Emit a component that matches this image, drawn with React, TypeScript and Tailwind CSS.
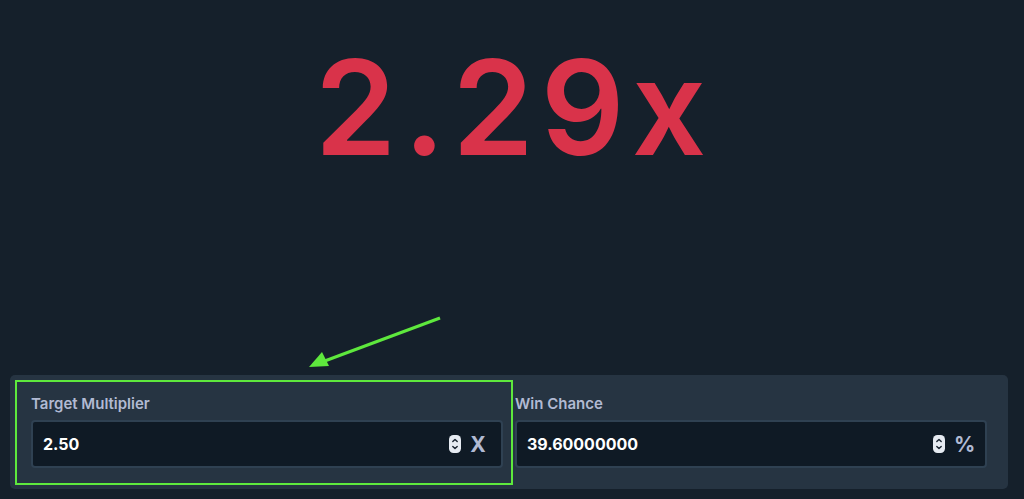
import React from "react";

const Spinner = () => (
  <svg width="12" height="18" viewBox="0 0 12 18" className="shrink-0">
    <rect x="0" y="0" width="12" height="18" rx="4.5" fill="#e6ebf2" />
    <path d="M3.8 6.6 L6 4.4 L8.2 6.6" stroke="#1a2430" strokeWidth="1.4" fill="none" strokeLinecap="round" strokeLinejoin="round" />
    <path d="M3.8 11.4 L6 13.6 L8.2 11.4" stroke="#1a2430" strokeWidth="1.4" fill="none" strokeLinecap="round" strokeLinejoin="round" />
  </svg>
);

const Field = ({ label, value, suffix }: { label: string; value: string; suffix: string }) => (
  <div className="flex flex-1 flex-col">
    <label className="mb-[6px] text-[15px] font-semibold leading-[20px] text-[#b1bad3]">{label}</label>
    <div className="flex h-[48px] items-center rounded-[4px] border-2 border-[#2f4152] bg-[#0f1a25] pl-[10px] pr-[15px]">
      <span className="flex-1 text-[16px] font-bold text-white">{value}</span>
      <Spinner />
      <span className="ml-[9px] w-[16px] text-center text-[21px] font-bold leading-none text-[#b1bad3]">{suffix}</span>
    </div>
  </div>
);

export default function App() {
  return (
    <div className="relative flex h-[499px] w-[1024px] flex-col overflow-hidden bg-[#15202b]" style={{ fontFamily: "Inter, 'Noto Sans', sans-serif" }}>
      <div className="flex h-[375px] justify-center pl-[4px] pt-[33px]">
        <span className="text-[131px] font-semibold leading-[150px] tracking-[7px] text-[#d9334a]">2.29x</span>
      </div>
      <div className="ml-[10px] mr-[16px] flex gap-[12px] rounded-[5px] bg-[#263442] px-[21px] pb-[21px] pt-[19px]">
        <Field label="Target Multiplier" value="2.50" suffix="X" />
        <Field label="Win Chance" value="39.60000000" suffix="%" />
      </div>

      {/* annotation overlay */}
      <div className="pointer-events-none absolute left-[15px] top-[380px] h-[105px] w-[498px] border-2 border-[#5ee83d]" />
      <svg className="pointer-events-none absolute left-0 top-0" width="1024" height="499">
        <line x1="440" y1="318" x2="322" y2="362" stroke="#5ee83d" strokeWidth="3" />
        <polygon points="309,367 322,352 329,366" fill="#5ee83d" />
      </svg>
    </div>
  );
}
